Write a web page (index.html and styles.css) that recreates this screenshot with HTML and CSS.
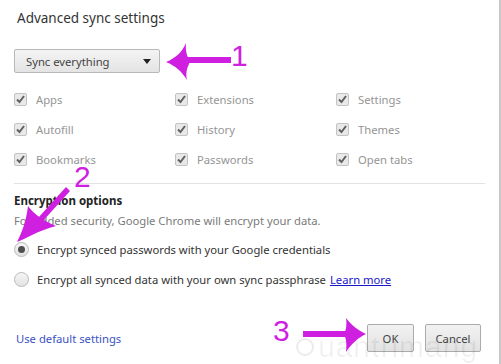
FILE: index.html
```html
<!DOCTYPE html>
<html>
<head>
<meta charset="utf-8">
<link rel="stylesheet" href="styles.css">
</head>
<body>
<div class="dialog">
  <h1 class="title">Advanced sync settings</h1>
  <div class="select">
    <span>Sync everything</span>
    <span class="caret"></span>
  </div>
  <div class="grid">
    <div class="item"><span class="cb"></span>Apps</div>
    <div class="item"><span class="cb"></span>Extensions</div>
    <div class="item"><span class="cb"></span>Settings</div>
    <div class="item"><span class="cb"></span>Autofill</div>
    <div class="item"><span class="cb"></span>History</div>
    <div class="item"><span class="cb"></span>Themes</div>
    <div class="item"><span class="cb"></span>Bookmarks</div>
    <div class="item"><span class="cb"></span>Passwords</div>
    <div class="item"><span class="cb"></span>Open tabs</div>
  </div>
  <div class="sep"></div>
  <h2 class="enc-title">Encryption options</h2>
  <p class="desc">For added security, Google Chrome will encrypt your data.</p>
  <div class="radios">
    <div class="radio-row"><span class="radio checked"></span>Encrypt synced passwords with your Google credentials</div>
    <div class="radio-row"><span class="radio"></span>Encrypt all synced data with your own sync passphrase <a class="learn" href="#">Learn more</a></div>
  </div>
  <div class="footer">
    <a class="default-link" href="#">Use default settings</a>
    <div class="buttons">
      <button class="btn ok">OK</button>
      <button class="btn">Cancel</button>
    </div>
  </div>

  <div class="watermark"><span class="bulb"></span>uantrimang</div>

  <svg class="annot" width="501" height="364" viewBox="0 0 501 364">
    <g fill="#cf1fe0" stroke="none">
      <rect x="182" y="57" width="49" height="6"/>
      <path d="M166 62 C176 58 182 52 186 43 C185 52 188 58 190 62 C188 66 185 72 187 80 C182 72 176 66 166 62 Z"/>
      <path d="M66 187 L70 191 L42 222 L38 218 Z"/>
      <path d="M17 242 C22 232 26 222 28 206 C34 214 42 220 56 226 C48 228 40 231 30 236 C26 238 22 240 17 242 Z"/>
      <rect x="303" y="331" width="45" height="6"/>
      <path d="M366 334 C358 330 352 326 346 318 C347 326 346 330 344 334 C346 338 347 344 346 352 C352 343 358 338 366 334 Z"/>
    </g>
  </svg>
  <span class="num n1">1</span>
  <span class="num n2">2</span>
  <span class="num n3">3</span>
</div>
</body>
</html>
```

FILE: styles.css
```css
* { box-sizing: border-box; }
html, body { margin: 0; padding: 0; background: #fff; }
body {
  width: 501px;
  height: 364px;
  overflow: hidden;
  font-family: "Noto Sans", "Open Sans", sans-serif;
  font-size: 11.25px;
  color: #333;
}
.dialog {
  position: relative;
  width: 501px;
  height: 364px;
  border-right: 2px solid #c9c9c9;
  padding: 0 0 0 14px;
}
.title {
  margin: 0;
  padding: 8px 0 0 3px;
  font-size: 13.5px;
  font-weight: normal;
  line-height: 20px;
  color: #333;
}
.select {
  margin-top: 21px;
  width: 146px;
  height: 24px;
  border: 1px solid #b8b8b8;
  border-radius: 2px;
  background: linear-gradient(#f4f4f4, #e4e4e4);
  display: flex;
  align-items: center;
  justify-content: space-between;
  padding: 0 8px 0 11px;
  color: #444;
}
.caret {
  width: 0; height: 0;
  border-left: 4px solid transparent;
  border-right: 4px solid transparent;
  border-top: 5px solid #222;
}
.grid {
  margin-top: 11px;
  display: grid;
  grid-template-columns: 161px 161px 150px;
  grid-auto-rows: 30px;
}
.item {
  display: flex;
  align-items: center;
  color: #959595;
}
.cb {
  width: 13px;
  height: 13px;
  margin-right: 9px;
  border: 1px solid #c3c3c3;
  border-radius: 2px;
  background: #e9e9e9 url("data:image/svg+xml;utf8,<svg xmlns='http://www.w3.org/2000/svg' width='11' height='11' viewBox='0 0 11 11'><path d='M2 5.5 L4.5 8 L9 2' fill='none' stroke='%23606060' stroke-width='2'/></svg>") center / 11px 11px no-repeat;
}
.sep {
  margin: 9px 0 0 0;
  width: 471px;
  height: 1px;
  background: #e3e3e3;
}
.enc-title {
  margin: 8px 0 0 0;
  font-size: 11.5px;
  font-weight: bold;
  line-height: 18px;
  color: #222;
}
.desc {
  margin: 2px 0 0 0;
  line-height: 18px;
  color: #7a7a7a;
}
.radios {
  margin-top: 4px;
}
.radio-row {
  display: flex;
  align-items: center;
  height: 30px;
  color: #333;
}
.radio {
  width: 15px;
  height: 15px;
  margin-right: 8px;
  border-radius: 50%;
  border: 1px solid #b9b9b9;
  background: linear-gradient(#f6f6f6, #e2e2e2);
  display: flex;
  align-items: center;
  justify-content: center;
}
.radio.checked::after {
  content: "";
  width: 7px;
  height: 7px;
  border-radius: 50%;
  background: #4f4f4f;
}
.learn {
  margin-left: 4px;
  color: #1818c8;
  text-decoration: underline;
}
.footer {
  margin-top: 30px;
  display: flex;
  align-items: center;
  justify-content: space-between;
  width: 467px;
}
.default-link {
  margin-left: 2px;
  color: #3a52c4;
  text-decoration: none;
}
.buttons { display: flex; gap: 11px; }
.btn {
  height: 28px;
  border: 1px solid #ababab;
  border-radius: 2px;
  background: linear-gradient(#f2f2f2, #e2e2e2);
  font-family: "Noto Sans", "Open Sans", sans-serif;
  font-size: 11.25px;
  color: #444;
  padding: 0;
  width: 56px;
}
.btn.ok { width: 47px; }
.annot {
  position: absolute;
  left: 0; top: 0;
  pointer-events: none;
}
.num {
  position: absolute;
  font-family: "Liberation Sans", Arial, sans-serif;
  font-size: 30px;
  line-height: 30px;
  color: #cf1fe0;
}
.n1 { left: 231px; top: 41px; }
.n2 { left: 74px; top: 162px; }
.n3 { left: 273px; top: 316px; }
.watermark {
  position: absolute;
  left: 296px;
  top: 331px;
  font-family: "Liberation Sans", Arial, sans-serif;
  font-size: 30px;
  line-height: 32px;
  color: rgba(0,0,0,0.06);
  display: flex;
  align-items: center;
  letter-spacing: 1px;
}
.bulb {
  width: 18px; height: 18px;
  border: 2px solid rgba(0,0,0,0.08);
  border-radius: 50%;
  margin-right: 4px;
}
```
